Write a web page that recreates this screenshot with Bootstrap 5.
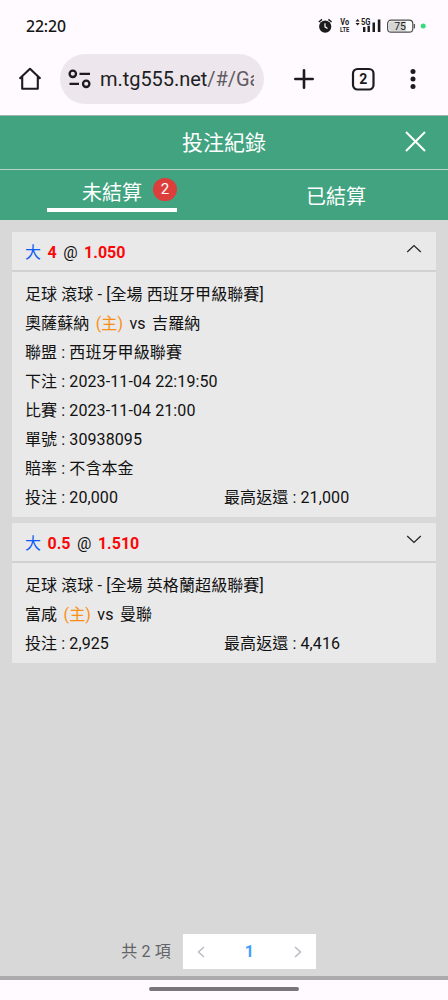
<!DOCTYPE html>
<html lang="zh-Hant">
<head>
<meta charset="utf-8">
<meta name="viewport" content="width=device-width, initial-scale=1">
<title>投注紀錄</title>
<link href="https://cdn.jsdelivr.net/npm/bootstrap@5.3.0/dist/css/bootstrap.min.css" rel="stylesheet">
<style>
body{font-family:Roboto,"Noto Sans CJK TC",sans-serif;font-size:16px;color:#111;background:#fefaff;height:1000px;overflow:hidden}
svg{display:block;flex:none}
.status{height:52px;padding:0 22px 0 26px;color:#151515}
.clock{font:500 15.8px/52px "Noto Sans",sans-serif;letter-spacing:-.1px}
.browser{height:63px;padding:0 0 9px 18px}
.url{width:204px;height:50px;background:#eee6ed;padding-left:8px;margin-left:18px}
.url-text{font-size:20px;letter-spacing:-.05px;white-space:nowrap;width:154px;overflow:hidden;color:#211f24}
.url-text span{color:#605b63}
.add-tab{margin-left:30px}
.tab-count{margin-left:37px}
.menu-dots{margin-left:35px}
.green{background:#41a380;color:#fff}
.title-bar{height:55px;border-top:1px solid #9fb5ac;border-bottom:1px solid #b9d1c6;font-size:21px;padding-top:2px}
.close-x{right:22px;top:15px}
.tabs{height:50px;font-size:20px}
.tab-on{width:130px;height:42px;border-bottom:4px solid #fff;line-height:46px;padding-left:35px}
.count{width:24px;height:23px;right:0;top:8px;border-radius:50%;background:#dc3e3c;font-size:15px;line-height:23px}
.main{background:#d8d8d8;height:760px;border-bottom:4px solid #acaaac;padding:12px 12px 0}
.bet{background:#e9e9e9;margin-bottom:6px}
.bet-head{height:40px;border-bottom:2px solid #d1d1d1;padding:3px 14px 0 13px;gap:6.5px}
.bet-head b{color:#f90808;font-weight:700}
.bet-head svg{margin-bottom:9px}
.bet-head .big{color:#0c5cf5}
.bet-body{padding:8px 13px 5px;line-height:29px;letter-spacing:.1px}
.host{color:#fa8f17;margin:0 2.3px}
.away{margin-left:2.3px}
.footer-row{margin-bottom:7px;padding-right:11px}
.pager{height:35px;width:133px;background:#fff;padding:0 14px;color:#409eff;font-weight:700}
.total{color:#626468;margin-right:12px;letter-spacing:.15px}
.home-pill{width:150px;height:4px;border-radius:2px;background:#79757a;margin:7px auto 0}
</style>
</head>
<body>
<div class="status d-flex align-items-center justify-content-between">
  <span class="clock">22:20</span>
  <svg width="110" height="20" viewBox="0 0 110 20" font-family="Roboto,sans-serif">
    <circle cx="9.200" cy="10.600" r="6.100" fill="#1b1b1b"/>
    <path d="M2.800 6 6 3.400M15.600 6 12.400 3.400" stroke="#1b1b1b" stroke-width="1.400"/>
    <path d="M9 7.200v3.600l2.500 1.600" stroke="#fff" stroke-width="1.200" fill="none"/>
    <g fill="#1b1b1b" font-weight="700">
      <text x="24.300" y="9" font-size="8.500" textLength="8.800" lengthAdjust="spacingAndGlyphs">Vo</text>
      <text x="24" y="16" font-size="8" textLength="9.400" lengthAdjust="spacingAndGlyphs">LTE</text>
      <text x="45" y="8.800" font-size="8.500" textLength="9.500" lengthAdjust="spacingAndGlyphs">5G</text>
      <path d="m39.500 5.500 2.100-2.400 2.100 2.400zM39.500 7h4.200l-2.100 2.400zM47 11h2.400v5H47zM51.500 9.800h2.400V16h-2.400zM56.500 6.500h2.500V16h-2.500zM61.800 3.500h2.600V16h-2.600z"/>
    </g>
    <rect x="71.600" y="4.200" width="25.200" height="12" rx="3.500" fill="#fafafa" stroke="#4d4d4d" stroke-width="1.200"/>
    <path d="M75.500 5.500H90v9.400H75.500q-2.500 0-2.500-2.500V8q0-2.500 2.500-2.500" fill="#d5d5d5"/>
    <path d="M98.400 8v4.400" stroke="#555" stroke-width="1.300"/>
    <text x="78.200" y="14" font-size="10.500" fill="#222">75</text>
    <circle cx="107.200" cy="10" r="2.500" fill="#36dc7b"/>
  </svg>
</div>
<div class="browser d-flex align-items-center">
  <svg width="24" height="24" viewBox="0 0 24 24" fill="none" stroke="#1d1b20" stroke-width="2.100"><path d="M1.500 11.800 12 1.800l10.500 10M4.200 9.500v12.300h15.600V9.500" stroke-linejoin="round"/></svg>
  <div class="url rounded-pill d-flex align-items-center">
    <svg width="24" height="22" viewBox="0 0 24 22" fill="none" stroke="#1d1b20" stroke-width="2.300"><circle cx="4.800" cy="5.800" r="3.200"/><path d="M11.500 5.800H22M1.500 15.800H11"/><circle cx="18.200" cy="15.800" r="3.200"/></svg>
    <div class="url-text ms-2">m.tg555.net<span>/#/Ga</span></div>
  </div>
  <svg class="add-tab" width="20" height="20" viewBox="0 0 20 20" stroke="#1d1b20" stroke-width="2.600" stroke-linecap="round"><path d="M10 1.300v17.400M1.300 10h17.400"/></svg>
  <svg class="tab-count" width="24" height="24" viewBox="0 0 24 24"><rect x="2" y="2" width="20.500" height="20.500" rx="4.500" fill="none" stroke="#1d1b20" stroke-width="2.200"/><text x="12.200" y="17" text-anchor="middle" font-family="Roboto,sans-serif" font-size="14" font-weight="700" fill="#1d1b20">2</text></svg>
  <svg class="menu-dots" width="6" height="22" viewBox="0 0 6 22" fill="#1d1b20"><circle cx="3" cy="3.500" r="2.500"/><circle cx="3" cy="11" r="2.500"/><circle cx="3" cy="18.500" r="2.500"/></svg>
</div>

<header class="green">
  <div class="title-bar position-relative d-flex align-items-center justify-content-center">投注紀錄
    <svg class="close-x position-absolute" width="21" height="21" viewBox="0 0 21 21" stroke="#fff" stroke-width="2"><path d="m1 1 19 19M20 1 1 20"/></svg>
  </div>
  <div class="tabs row g-0">
    <div class="col-6 d-flex justify-content-center"><div class="tab-on position-relative">未結算<span class="count position-absolute text-center">2</span></div></div>
    <div class="col-6 d-flex align-items-center justify-content-center pt-1">已結算</div>
  </div>
</header>

<main class="main d-flex flex-column">
  <section class="bet">
    <div class="bet-head d-flex align-items-center"><span class="big">大</span><b>4</b><span>@</span><b>1.050</b>
      <svg class="ms-auto" width="16" height="9" viewBox="0 0 16 9" fill="none" stroke="#222" stroke-width="1.200"><path d="m1.200 8 6.800-6.500L14.800 8"/></svg></div>
    <div class="bet-body">
      <div>足球 滾球 - [全場 西班牙甲級聯賽]</div>
      <div>奧薩蘇納 <span class="host">(主)</span> vs <span class="away">吉羅納</span></div>
      <div>聯盟 : 西班牙甲級聯賽</div>
      <div>下注 : 2023-11-04 22:19:50</div>
      <div>比賽 : 2023-11-04 21:00</div>
      <div>單號 : 30938095</div>
      <div>賠率 : 不含本金</div>
      <div class="row g-0"><div class="col-6">投注 : 20,000</div><div class="col-6">最高返還 : 21,000</div></div>
    </div>
  </section>
  <section class="bet">
    <div class="bet-head d-flex align-items-center"><span class="big">大</span><b>0.5</b><span>@</span><b>1.510</b>
      <svg class="ms-auto" width="16" height="9" viewBox="0 0 16 9" fill="none" stroke="#222" stroke-width="1.200"><path d="m1.200 1 6.800 6.500L14.800 1"/></svg></div>
    <div class="bet-body">
      <div>足球 滾球 - [全場 英格蘭超級聯賽]</div>
      <div>富咸 <span class="host">(主)</span> vs <span class="away">曼聯</span></div>
      <div class="row g-0"><div class="col-6">投注 : 2,925</div><div class="col-6">最高返還 : 4,416</div></div>
    </div>
  </section>
  <div class="footer-row mt-auto d-flex align-items-center justify-content-center">
    <span class="total">共 2 項</span>
    <div class="pager d-flex align-items-center justify-content-between">
      <svg width="8" height="12" viewBox="0 0 8 12" fill="none" stroke="#b9bcc4" stroke-width="1.500"><path d="M7 1 1.500 6 7 11"/></svg>
      <span>1</span>
      <svg width="8" height="12" viewBox="0 0 8 12" fill="none" stroke="#b9bcc4" stroke-width="1.500"><path d="m1 1 5.500 5L1 11"/></svg>
    </div>
  </div>
</main>
<div class="home-pill"></div>
</body>
</html>
